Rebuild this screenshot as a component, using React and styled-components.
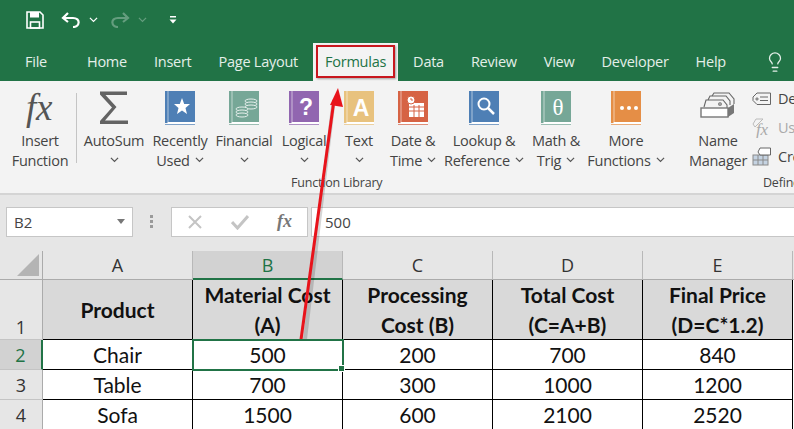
import React from 'react';
import styled, { createGlobalStyle } from 'styled-components';
import { Lightbulb } from 'lucide-react';

const TABS = ['Home', 'Insert', 'Page Layout', 'Formulas', 'Data', 'Review', 'View', 'Developer', 'Help'];

const Caret = ({ color = '#555', size = 9 }) => (
  <svg width={size} height={size * 0.62} viewBox="0 0 8 5" fill="none" stroke={color} strokeWidth="1.1">
    <path d="M0.8 0.8 L4 4 L7.2 0.8" />
  </svg>
);

const Book = ({ color, children }) => (
  <svg width="30" height="34" viewBox="0 0 30 34">
    <rect x="0" y="0" width="30" height="32" fill={color} />
    <rect x="2.5" y="0" width="1" height="31" fill="#fff" opacity="0.55" />
    <rect x="2.5" y="31" width="27.5" height="2" fill="#fff" />
    <rect x="0" y="33" width="30" height="1" fill={color} opacity="0.7" />
    {children}
  </svg>
);

const FxIcon = () => (
  <svg width="36" height="38" viewBox="0 0 36 38" overflow="visible">
    <text x="4" y="29" fontFamily="'Liberation Serif', serif" fontStyle="italic" fontSize="37" fill="#555">fx</text>
  </svg>
);

const SigmaIcon = () => (
  <svg width="30" height="34" viewBox="0 0 30 34">
    <path d="M1 0.500 H28 V4 H6.500 L17.500 16 L6 29.500 H29 V33 H1 V30 L13 16.500 L1 3.500 Z" fill="#636363" />
  </svg>
);

const NameIcon = () => (
  <svg width="36" height="36" viewBox="0 0 36 36" fill="none" stroke="#666" strokeWidth="1.100">
    <path d="M4 16 L6 9 H23 L27 14 V17" fill="#f3f3f3" />
    <path d="M8 9 L10 5 H26 L30 10 V14" />
    <path d="M12 5 L14 2 H29 L34 8 V13" />
    <circle cx="20" cy="13" r="1.300" />
    <rect x="1" y="17" width="27" height="9" fill="#fff" stroke="#777" strokeWidth="1.400" />
    <path d="M28 17 L34 13 V22 L28 26 Z" fill="#777" stroke="none" />
  </svg>
);

const TagIcon = () => (
  <svg width="20" height="14" viewBox="0 0 20 14" fill="none" stroke="#666" strokeWidth="1">
    <path d="M5 1 H18.500 V12.500 H5 L1 8.500 V5 Z" />
    <circle cx="5" cy="7" r="1.100" />
    <path d="M8 5 H16 M8 8.500 H16" />
  </svg>
);

const UseIcon = () => (
  <svg width="20" height="20" viewBox="0 0 20 20">
    <path d="M4 1 H11 L3 9 L1 6 Z" fill="none" stroke="#bbb" />
    <text x="4" y="17" fontFamily="'Liberation Serif', serif" fontStyle="italic" fontSize="17" fill="#aaa">fx</text>
  </svg>
);

const CreateIcon = () => (
  <svg width="20" height="19" viewBox="0 0 20 19">
    <rect x="1" y="8" width="15" height="10" fill="#c5d3e2" stroke="#8a8a8a" />
    <path d="M6 8 V18 M11 8 V18 M1 13 H16" stroke="#8a8a8a" />
    <path d="M8 1 H18.500 V8 H8 L6 5 Z" fill="#fff" stroke="#666" />
  </svg>
);

const CELLS = [
  { name: ['Insert', 'Function'], width: 72, icon: <FxIcon />, noCaret: true },
  { sep: true },
  { name: ['AutoSum', ''], width: 66, icon: <SigmaIcon />, caretBelow: true },
  {
    name: ['Recently', 'Used'], width: 66,
    icon: <Book color="#4e7fb5"><path d="M17 7 L19.200 13 H25 L20.500 17 L22 23 L17 19.500 L12 23 L13.500 17 L9 13 H14.800 Z" fill="#fff" /></Book>,
  },
  {
    name: ['Financial', ''], width: 62, caretBelow: true,
    icon: (
      <Book color="#76a797">
        <g fill="#76a797" stroke="#e6efec" strokeWidth="1">
          <ellipse cx="22" cy="10" rx="6" ry="2" />
          <ellipse cx="22" cy="13" rx="6" ry="2" />
          <ellipse cx="22" cy="16" rx="6" ry="2" />
          <ellipse cx="13" cy="18" rx="6" ry="2" />
          <ellipse cx="13" cy="21" rx="6" ry="2" />
          <ellipse cx="13" cy="24" rx="6" ry="2" />
        </g>
      </Book>
    ),
  },
  {
    name: ['Logical', ''], width: 58, caretBelow: true,
    icon: <Book color="#9166b0"><text x="17" y="24" textAnchor="middle" fontFamily="'Liberation Sans', sans-serif" fontWeight="700" fontSize="23" fill="#fff">?</text></Book>,
  },
  {
    name: ['Text', ''], width: 52, caretBelow: true,
    icon: <Book color="#e8c27e"><text x="17" y="25" textAnchor="middle" fontFamily="'Liberation Sans', sans-serif" fontWeight="700" fontSize="23" fill="#fff">A</text></Book>,
  },
  {
    name: ['Date &', 'Time'], width: 56,
    icon: (
      <Book color="#d66344">
        <rect x="11" y="12" width="15" height="14" fill="#fff" />
        <path d="M11 16 H26 M11 20 H26 M16 14 V26 M21 14 V26" stroke="#d66344" />
        <circle cx="13" cy="9" r="4" fill="#fff" stroke="#d66344" />
        <path d="M13 7 V9 H15" stroke="#d66344" fill="none" />
      </Book>
    ),
  },
  {
    name: ['Lookup &', 'Reference'], width: 86,
    icon: (
      <Book color="#4e7fb5">
        <circle cx="15" cy="13" r="5.500" fill="none" stroke="#fff" strokeWidth="2" />
        <path d="M19 17 L25 23" stroke="#fff" strokeWidth="2.500" />
      </Book>
    ),
  },
  {
    name: ['Math &', 'Trig'], width: 58,
    icon: <Book color="#76a797"><text x="17" y="24" textAnchor="middle" fontFamily="'Liberation Serif', serif" fontSize="23" fill="#fff">θ</text></Book>,
  },
  {
    name: ['More', 'Functions'], width: 82,
    icon: (
      <Book color="#e58e46">
        <circle cx="11" cy="17" r="2" fill="#fff" />
        <circle cx="18" cy="17" r="2" fill="#fff" />
        <circle cx="25" cy="17" r="2" fill="#fff" />
      </Book>
    ),
  },
];

const COLUMNS = ['A', 'B', 'C', 'D', 'E'];

const ROWS = [
  { n: 2, cells: ['Chair', '500', '200', '700', '840'] },
  { n: 3, cells: ['Table', '700', '300', '1000', '1200'] },
  { n: 4, cells: ['Sofa', '1500', '600', '2100', '2520'] },
];

const HEADINGS = [
  ['Product'],
  ['Material Cost', '(A)'],
  ['Processing', 'Cost (B)'],
  ['Total Cost', '(C=A+B)'],
  ['Final Price', '(D=C*1.2)'],
];

export default function App() {
  return (
    <>
      <GlobalStyle />
      <Page>
        <TitleBar>
          <svg width="18" height="18" viewBox="0 0 18 18" fill="none" stroke="#fff" strokeWidth="1.600">
            <path d="M1 1 H14 L17 4 V17 H1 Z" />
            <rect x="4" y="1" width="9" height="5.500" fill="#fff" stroke="none" />
            <rect x="4.500" y="11" width="9" height="6" />
          </svg>
          <UndoSlot>
            <svg width="19" height="16" viewBox="0 0 19 16" fill="none" stroke="#fff" strokeWidth="2.200">
              <path d="M7 1 L2 6 L7 10 M2 6 H12 C20 6 19 15 12 15" />
            </svg>
            <Caret color="#fff" />
          </UndoSlot>
          <RedoSlot>
            <svg width="19" height="16" viewBox="0 0 19 16" fill="none" stroke="#fff" strokeWidth="2.200">
              <path d="M12 1 L17 6 L12 10 M17 6 H7 C-1 6 0 15 7 15" />
            </svg>
            <Caret color="#fff" />
          </RedoSlot>
          <svg width="8" height="8" viewBox="0 0 8 8" fill="#fff">
            <rect x="1" y="0" width="6" height="1.500" />
            <path d="M0.500 3.500 H7.500 L4 7.500 Z" />
          </svg>
        </TitleBar>

        <TabBar>
          <FileTab>File</FileTab>
          {TABS.map(tab => (
            <Tab key={tab} $active={tab === 'Formulas'}>
              {tab}
              {tab === 'Formulas' && <TabHighlight />}
            </Tab>
          ))}
          <BulbSlot>
            <Lightbulb size={22} strokeWidth={1.4} />
          </BulbSlot>
        </TabBar>

        <Ribbon>
          <LibraryGroup>
            <CommandRow>
              {CELLS.map((cmd, i) =>
                cmd.sep ? (
                  <Separator key={i} />
                ) : (
                  <Command key={i} $width={cmd.width}>
                    <IconSlot>{cmd.icon}</IconSlot>
                    <CommandLine>{cmd.name[0]}</CommandLine>
                    {cmd.caretBelow ? (
                      <CommandLine><Caret /></CommandLine>
                    ) : (
                      <CommandLine>
                        {cmd.name[1]}
                        {!cmd.noCaret && <InlineCaret><Caret /></InlineCaret>}
                      </CommandLine>
                    )}
                  </Command>
                ),
              )}
            </CommandRow>
            <GroupLabel>Function Library</GroupLabel>
          </LibraryGroup>
          <GroupDivider />
          <NamesGroup>
            <CommandRow>
              <Command $width={66}>
                <IconSlot><NameIcon /></IconSlot>
                <CommandLine>Name</CommandLine>
                <CommandLine>Manager</CommandLine>
              </Command>
              <SmallList>
                <SmallItem><TagIcon />Define Name</SmallItem>
                <SmallItem $disabled><UseIcon />Use in Formula</SmallItem>
                <SmallItem><CreateIcon />Create from Selection</SmallItem>
              </SmallList>
            </CommandRow>
            <NamesLabel>Defined Names</NamesLabel>
          </NamesGroup>
        </Ribbon>

        <FormulaBar>
          <NameBox>
            B2
            <svg width="8" height="5" viewBox="0 0 8 5" fill="#777"><path d="M0 0 H8 L4 5 Z" /></svg>
          </NameBox>
          <Grip />
          <FormulaButtons>
            <svg width="16" height="16" viewBox="0 0 16 16" stroke="#c4c4c4" strokeWidth="2"><path d="M2 2 L14 14 M14 2 L2 14" /></svg>
            <svg width="18" height="16" viewBox="0 0 18 16" fill="none" stroke="#c4c4c4" strokeWidth="3"><path d="M1 8 L6.500 14 L17 2" /></svg>
            <FxMark>fx</FxMark>
          </FormulaButtons>
          <FormulaInput>500</FormulaInput>
        </FormulaBar>

        <Sheet>
          <Corner>
            <svg width="22" height="22" viewBox="0 0 22 22" fill="#b4b4b4"><path d="M22 0 V22 H0 Z" /></svg>
          </Corner>
          {COLUMNS.map(c => (
            <ColHead key={c} $selected={c === 'B'}>{c}</ColHead>
          ))}
          <Filler $head />

          <RowHead $tall>1</RowHead>
          {HEADINGS.map((lines, i) => (
            <HeadCell key={i}>
              {lines.map(line => <span key={line}>{line}</span>)}
            </HeadCell>
          ))}
          <Filler />

          {ROWS.map(row => (
            <React.Fragment key={row.n}>
              <RowHead $selected={row.n === 2}>{row.n}</RowHead>
              {row.cells.map((value, i) => (
                <Cell key={i} $active={row.n === 2 && i === 1}>{value}</Cell>
              ))}
              <Filler />
            </React.Fragment>
          ))}
        </Sheet>

        <ArrowLayer width="794" height="429" viewBox="0 0 794 429">
          <path d="M303 356 L333 106" stroke="#000" strokeOpacity="0.16" strokeWidth="4" fill="none" />
          <path d="M299 354 L334 100" stroke="#e8131b" strokeWidth="3" fill="none" />
          <path d="M338 88 L343 107 L330 105 Z" fill="#e8131b" />
        </ArrowLayer>
      </Page>
    </>
  );
}

const GlobalStyle = createGlobalStyle`
  html, body {
    margin: 0;
    padding: 0;
    background: #fff;
  }
`;

const Page = styled.div`
  position: relative;
  width: 794px;
  height: 429px;
  overflow: hidden;
  font-family: 'Open Sans', 'Noto Sans', sans-serif;
`;

// title bar
const TitleBar = styled.div`
  display: flex;
  align-items: center;
  height: 43px;
  padding-left: 26px;
  padding-bottom: 3px;
  box-sizing: border-box;
  background: #217346;
`;

const UndoSlot = styled.div`
  display: flex;
  align-items: center;
  gap: 9px;
  margin-left: 17px;
`;

const RedoSlot = styled.div`
  display: flex;
  align-items: center;
  gap: 8px;
  margin-left: 13px;
  margin-right: 22px;
  opacity: 0.3;
`;

// tabs
const TabBar = styled.div`
  display: flex;
  height: 38px;
  padding-left: 11.5px;
  box-sizing: border-box;
  background: #217346;
`;

const Tab = styled.div`
  position: relative;
  display: flex;
  align-items: center;
  padding: ${p => (p.$active ? '0 12px 2px' : '0 13.5px 2px')};
  margin: ${p => (p.$active ? '0 1.5px' : '0')};
  font-size: 14.5px;
  letter-spacing: -0.25px;
  color: ${p => (p.$active ? '#217346' : '#e4efe9')};
  background: ${p => (p.$active ? '#f3f3f3' : 'transparent')};
`;

const FileTab = styled(Tab)`
  margin-right: 13px;
`;

const TabHighlight = styled.div`
  position: absolute;
  left: 3px;
  right: 3px;
  top: 2px;
  bottom: 3px;
  border: 2px solid #c8171e;
  box-shadow: 1px 1px 2px rgba(0, 0, 0, 0.35);
`;

const BulbSlot = styled.div`
  display: flex;
  align-items: center;
  margin-left: 25px;
  color: #e4efe9;
`;

// ribbon
const Ribbon = styled.div`
  display: flex;
  height: 114px;
  box-sizing: border-box;
  padding-left: 4px;
  background: #f3f3f3;
  border-bottom: 2px solid #d4d4d4;
  color: #444;
  font-size: 14.5px;
  letter-spacing: -0.25px;
`;

const LibraryGroup = styled.div`
  display: flex;
  flex-direction: column;
  width: 663px;
`;

const CommandRow = styled.div`
  display: flex;
  height: 94px;
`;

const Separator = styled.div`
  width: 1px;
  height: 70px;
  margin: 12px 4px 0 0;
  background: #c4c4c4;
`;

const Command = styled.div`
  flex: none;
  display: flex;
  flex-direction: column;
  align-items: center;
  width: ${p => p.$width}px;
  padding-top: 10px;
  box-sizing: border-box;
`;

const IconSlot = styled.div`
  display: flex;
  align-items: flex-start;
  justify-content: center;
  height: 39px;
`;

const CommandLine = styled.div`
  display: flex;
  align-items: center;
  justify-content: center;
  height: 20px;
  white-space: nowrap;
`;

const InlineCaret = styled.span`
  display: flex;
  margin-left: 5px;
`;

const GroupLabel = styled.div`
  margin-left: 287px;
  font-size: 12.5px;
  line-height: 20px;
  letter-spacing: -0.2px;
`;

const GroupDivider = styled.div`
  width: 1px;
  height: 104px;
  margin: 5px 0 0 9px;
  background: #a8a8a8;
`;

const NamesGroup = styled.div`
  display: flex;
  flex-direction: column;
  margin-left: 9px;
  width: 200px;
  flex: none;
`;

const NamesLabel = styled(GroupLabel)`
  margin-left: 78px;
`;

const SmallList = styled.div`
  display: flex;
  flex-direction: column;
  gap: 4px;
  margin: 5px 0 0 1px;
`;

const SmallItem = styled.div`
  display: flex;
  align-items: center;
  gap: 6px;
  height: 25px;
  white-space: nowrap;
  color: ${p => (p.$disabled ? '#aaa' : '#444')};
`;

// formula bar
const FormulaBar = styled.div`
  display: flex;
  align-items: center;
  height: 56px;
  box-sizing: border-box;
  padding: 0 0 3px 6px;
  background: #e6e6e6;
`;

const NameBox = styled.div`
  display: flex;
  align-items: center;
  justify-content: space-between;
  width: 127px;
  height: 30px;
  box-sizing: border-box;
  padding: 0 7px;
  background: #fff;
  border: 1px solid #c6c6c6;
  color: #444;
  font-size: 15px;
`;

const Grip = styled.div`
  width: 3px;
  height: 13px;
  margin: 0 18px 0 17px;
  background: repeating-linear-gradient(#9a9a9a 0 3px, transparent 3px 5px);
`;

const FormulaButtons = styled.div`
  display: flex;
  align-items: center;
  justify-content: space-between;
  width: 137px;
  height: 30px;
  box-sizing: border-box;
  padding: 0 15px;
  background: #fff;
  border: 1px solid #c6c6c6;
`;

const FxMark = styled.span`
  font-family: 'Liberation Serif', serif;
  font-style: italic;
  font-weight: 700;
  font-size: 18px;
  color: #777;
`;

const FormulaInput = styled.div`
  flex: 1;
  display: flex;
  align-items: center;
  height: 30px;
  box-sizing: border-box;
  margin-left: 3px;
  padding-left: 13px;
  background: #fff;
  border: 1px solid #c6c6c6;
  border-right: 0;
  color: #444;
  font-size: 15px;
`;

// sheet
const Sheet = styled.div`
  display: grid;
  grid-template-columns: 43px repeat(5, 150px) 1fr;
  grid-template-rows: 29px 60px 30px 30px 30px;
  font-family: 'Lato', 'Open Sans', sans-serif;
  font-size: 21px;
  color: #111;
`;

const Corner = styled.div`
  display: flex;
  align-items: flex-end;
  justify-content: flex-end;
  padding: 0 3px 3px 0;
  background: #e6e6e6;
  border-bottom: 1px solid #ababab;
  border-right: 1px solid #ababab;
`;

const ColHead = styled.div`
  display: flex;
  align-items: center;
  justify-content: center;
  font-family: 'Open Sans', sans-serif;
  font-size: 18px;
  color: ${p => (p.$selected ? '#217346' : '#333')};
  background: ${p => (p.$selected ? '#d2d2d2' : '#e6e6e6')};
  border-right: 1px solid #b8b8b8;
  border-bottom: ${p => (p.$selected ? '2px solid #217346' : '1px solid #ababab')};
`;

const Filler = styled.div`
  background: ${p => (p.$head ? '#e6e6e6' : '#fff')};
  border-bottom: ${p => (p.$head ? '1px solid #ababab' : '0')};
`;

const RowHead = styled.div`
  display: flex;
  align-items: ${p => (p.$tall ? 'flex-end' : 'center')};
  justify-content: center;
  font-family: 'Open Sans', sans-serif;
  font-size: 18px;
  color: ${p => (p.$selected ? '#217346' : '#333')};
  background: ${p => (p.$selected ? '#d2d2d2' : '#e6e6e6')};
  border-right: ${p => (p.$selected ? '2px solid #217346' : '1px solid #ababab')};
  border-bottom: 1px solid #c4c4c4;
  box-sizing: border-box;
`;

const HeadCell = styled.div`
  display: flex;
  flex-direction: column;
  align-items: center;
  justify-content: center;
  line-height: 30px;
  font-weight: 700;
  background: #d9d9d9;
  border-right: 1px solid #000;
  border-bottom: 1px solid #000;
`;

const Cell = styled.div`
  position: relative;
  display: flex;
  align-items: center;
  justify-content: center;
  background: #fff;
  border-right: 1px solid #000;
  border-bottom: 1px solid #000;
  ${p =>
    p.$active &&
    `
    outline: 2px solid #217346;
    outline-offset: -1px;
    z-index: 1;
    &::after {
      content: '';
      position: absolute;
      right: -3px;
      bottom: -3px;
      width: 5px;
      height: 5px;
      background: #217346;
      border: 1px solid #fff;
    }
  `}
`;

const ArrowLayer = styled.svg`
  position: absolute;
  left: 0;
  top: 0;
  pointer-events: none;
`;
